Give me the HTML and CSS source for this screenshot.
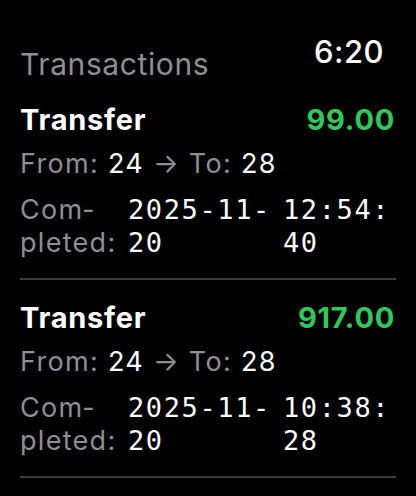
FILE: index.html
```html
<!DOCTYPE html>
<html lang="en">
<head>
    <meta charset="UTF-8">
    <meta name="viewport" content="width=device-width, initial-scale=1.0">
    <title>Transactions</title>
    <link rel="stylesheet" href="styles.css">
</head>
<body>
    <div id="screen">
        <div id="header">
            <div id="title">Transactions</div>
            <div id="clock">6:20</div>
        </div>
        <div id="list">
            <div class="tx">
                <div class="tx-top">
                    <span class="tx-type">Transfer</span>
                    <span class="tx-amount">99.00</span>
                </div>
                <div class="tx-route">From: <span class="val">24</span> &rarr; To: <span class="val">28</span></div>
                <div class="tx-done">
                    <span class="label">Com&shy;pleted:</span>
                    <span class="mono">2025-11-20</span>
                    <span class="mono">12:54:40</span>
                </div>
            </div>
            <div class="divider"></div>
            <div class="tx">
                <div class="tx-top">
                    <span class="tx-type">Transfer</span>
                    <span class="tx-amount">917.00</span>
                </div>
                <div class="tx-route">From: <span class="val">24</span> &rarr; To: <span class="val">28</span></div>
                <div class="tx-done">
                    <span class="label">Com&shy;pleted:</span>
                    <span class="mono">2025-11-20</span>
                    <span class="mono">10:38:28</span>
                </div>
            </div>
            <div class="divider"></div>
        </div>
    </div>
</body>
</html>
```

FILE: styles.css
```css
* {
    margin: 0;
    padding: 0;
    box-sizing: border-box;
}
body {
    font-family: 'Inter', 'Noto Sans', sans-serif;
    background-color: #000000;
    color: #ffffff;
    width: 416px;
    height: 496px;
    overflow: hidden;
}
#screen {
    padding: 33px 20px 0 20px;
}
/* Header */
#header {
    display: flex;
    justify-content: space-between;
    align-items: flex-start;
}
#title {
    margin-top: 13px;
    font-size: 30px;
    line-height: 36px;
    letter-spacing: 0.6px;
    color: #8e8e93;
}
#clock {
    margin-right: 12px;
    font-size: 31px;
    line-height: 38px;
    font-weight: 500;
    letter-spacing: 0.5px;
    color: #ffffff;
}
/* Rows */
.tx {
    padding: 20px 0 19px 0;
}
.tx-top {
    display: flex;
    justify-content: space-between;
    font-size: 29px;
    line-height: 36px;
    font-weight: 700;
    letter-spacing: 0.75px;
}
.tx-amount {
    color: #32c75a;
    margin-right: 1px;
}
.tx-route {
    margin-top: 9px;
    font-size: 27px;
    line-height: 34px;
    letter-spacing: 1.3px;
    color: #8e8e93;
}
.tx-route .val {
    color: #ffffff;
}
.tx-done {
    display: grid;
    grid-template-columns: 108px 155px 1fr;
    margin-top: 12px;
    font-size: 27px;
    line-height: 33px;
}
.tx-done .label {
    color: #8e8e93;
    letter-spacing: 1.3px;
    hyphens: manual;
}
.mono {
    font-family: 'DejaVu Sans Mono', monospace;
    letter-spacing: 1.6px;
    overflow-wrap: anywhere;
}
.divider {
    height: 2px;
    background-color: #3a3a3c;
}
```
